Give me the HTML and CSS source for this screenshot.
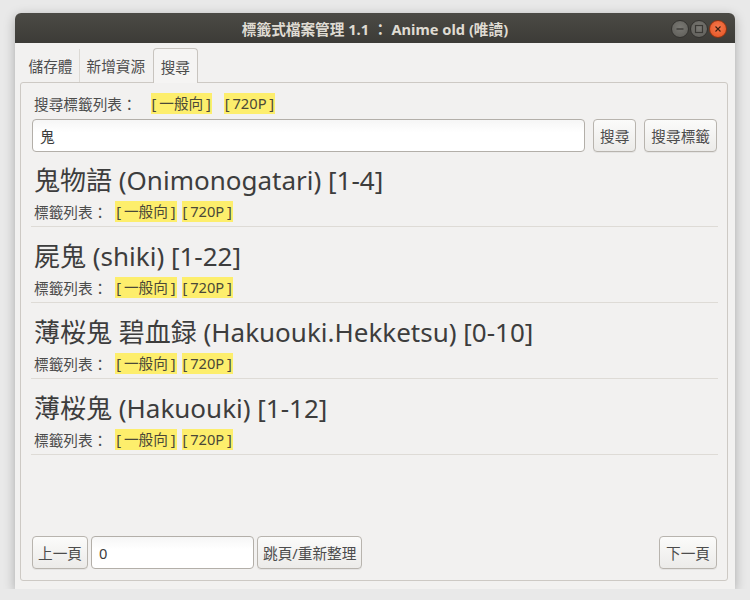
FILE: index.html
```html
<!DOCTYPE html>
<html lang="zh-Hant">
<head>
    <meta charset="UTF-8">
    <meta name="viewport" content="width=device-width, initial-scale=1.0">
    <title>標籤式檔案管理 1.1</title>
    <link rel="stylesheet" href="styles.css">
</head>
<body>
    <div class="window">
        <div class="titlebar">
            <span class="title">標籤式檔案管理 1.1 ： Anime old (唯讀)</span>
            <div class="win-buttons">
                <span class="wbtn"><svg width="10" height="10" viewBox="0 0 10 10"><path d="M1.5 5h7" stroke="#3a3935" stroke-width="1.3"/></svg></span>
                <span class="wbtn"><svg width="10" height="10" viewBox="0 0 10 10"><rect x="1.5" y="1.5" width="7" height="7" fill="none" stroke="#3a3935" stroke-width="1.2"/></svg></span>
                <span class="wbtn close"><svg width="10" height="10" viewBox="0 0 10 10"><path d="M2.5 2.5l5 5M7.5 2.5l-5 5" stroke="#3b1f12" stroke-width="1.1"/></svg></span>
            </div>
        </div>
        <div class="client">
            <div class="tabs">
                <div class="tab">儲存體</div>
                <div class="tab">新增資源</div>
                <div class="tab active">搜尋</div>
            </div>
            <div class="pane">
                <div class="search-tags">
                    <span class="label">搜尋標籤列表：</span>
                    <span class="tag">[ 一般向 ]</span>
                    <span class="tag">[ 720P ]</span>
                </div>
                <div class="search-row">
                    <input class="field search-field" type="text" value="鬼">
                    <button class="btn">搜尋</button>
                    <button class="btn">搜尋標籤</button>
                </div>

                <div class="results">
                    <div class="item">
                        <div class="item-title">鬼物語 (Onimonogatari) [1-4]</div>
                        <div class="item-tags"><span class="label">標籤列表：</span><span class="tag">[ 一般向 ]</span><span class="tag">[ 720P ]</span></div>
                    </div>
                    <div class="item">
                        <div class="item-title">屍鬼 (shiki) [1-22]</div>
                        <div class="item-tags"><span class="label">標籤列表：</span><span class="tag">[ 一般向 ]</span><span class="tag">[ 720P ]</span></div>
                    </div>
                    <div class="item">
                        <div class="item-title">薄桜鬼 碧血録 (Hakuouki.Hekketsu) [0-10]</div>
                        <div class="item-tags"><span class="label">標籤列表：</span><span class="tag">[ 一般向 ]</span><span class="tag">[ 720P ]</span></div>
                    </div>
                    <div class="item">
                        <div class="item-title">薄桜鬼 (Hakuouki) [1-12]</div>
                        <div class="item-tags"><span class="label">標籤列表：</span><span class="tag">[ 一般向 ]</span><span class="tag">[ 720P ]</span></div>
                    </div>
                </div>

                <div class="pager">
                    <button class="btn">上一頁</button>
                    <input class="field page-field" type="text" value="0">
                    <button class="btn">跳頁/重新整理</button>
                    <button class="btn next">下一頁</button>
                </div>
            </div>
        </div>
    </div>
</body>
</html>
```

FILE: styles.css
```css
body {
    margin: 0;
    background: #e9e9e9;
    font-family: "Noto Sans", "Noto Sans CJK TC", sans-serif;
    color: #4c4c4c;
}

.window {
    width: 720px;
    height: 576px;
    margin: 13px 0 0 15px;
    display: flex;
    flex-direction: column;
    background: #f2f1f0;
    border-radius: 6px 6px 0 0;
    box-shadow: 0 3px 12px rgba(0, 0, 0, 0.28);
}

.titlebar {
    height: 30px;
    position: relative;
    display: flex;
    justify-content: center;
    align-items: center;
    background: linear-gradient(#4b4a45, #3c3b37);
    border-radius: 6px 6px 0 0;
}

.title {
    color: #dfdbd2;
    font-size: 14.67px;
    font-weight: bold;
}

.win-buttons {
    position: absolute;
    right: 8px;
    top: 7px;
    display: flex;
    gap: 1px;
}

.wbtn {
    width: 18px;
    height: 18px;
    border-radius: 50%;
    background: radial-gradient(circle at 50% 40%, #7a7974, #5c5b56);
    border: 1px solid #33322f;
    box-sizing: border-box;
    display: flex;
    align-items: center;
    justify-content: center;
}

.wbtn.close {
    background: radial-gradient(circle at 50% 40%, #f47a4f, #e4501e);
    border-color: #8a3414;
}

.client {
    flex: 1;
    display: flex;
    flex-direction: column;
    padding: 5px 7px 8px 5px;
}

.tabs {
    display: flex;
    height: 34px;
    margin-left: 2px;
    position: relative;
    z-index: 1;
}

.tab {
    font-size: 14.67px;
    padding: 0 6.5px;
    display: flex;
    align-items: center;
    color: #4c4c4c;
    border-right: 1px solid #dcd9d4;
    margin-top: 1px;
}

.tab:nth-child(2) {
    border-right: none;
}

.tab.active {
    margin-top: 0;
    margin-left: 1px;
    padding: 0 7px;
    background: #f5f4f3;
    border: 1px solid #c8c4bf;
    border-bottom: none;
    border-radius: 4px 4px 0 0;
    height: 35px;
    box-sizing: border-box;
}

.pane {
    flex: 1;
    display: flex;
    flex-direction: column;
    border: 1px solid #cdc9c4;
    border-radius: 3px;
    padding: 10px 10px 11px 11px;
}

.label {
    font-size: 14.67px;
    color: #4c4c4c;
}

.tag {
    font-size: 14.67px;
    background: #fdee6c;
    color: #4a4838;
    line-height: 21px;
    padding: 0 1px;
    white-space: pre;
    word-spacing: -1px;
}

.search-tags {
    display: flex;
    align-items: center;
    height: 21px;
    padding-left: 2px;
}

.search-tags .label {
    margin-right: 14px;
}

.search-tags .tag + .tag {
    margin-left: 12px;
}

.search-row {
    display: flex;
    gap: 8px;
    margin-top: 5px;
}

.field {
    height: 33px;
    box-sizing: border-box;
    border: 1px solid #b3afa9;
    border-radius: 4px;
    background: linear-gradient(#f6f6f6, #ffffff 40%);
    font-family: inherit;
    font-size: 14.67px;
    color: #3c3c3c;
    padding: 0 7px;
    outline: none;
}

.search-field {
    flex: 1;
}

.btn {
    height: 33px;
    box-sizing: border-box;
    border: 1px solid #b8b4ae;
    border-radius: 4px;
    background: linear-gradient(#fbfbfa, #ecebe9);
    box-shadow: 0 1px 0 rgba(0, 0, 0, 0.05);
    font-family: inherit;
    font-size: 14.67px;
    color: #4c4c4c;
    padding: 0 6px;
}

.results {
    flex: 1;
    padding-top: 11px;
}

.item {
    border-bottom: 1px solid #dedbd6;
    padding: 0 0 4px 2px;
    margin: 0 -1px 12px -1px;
}

.item-title {
    font-size: 26px;
    line-height: 34px;
    color: #3d3d3d;
    padding-left: 1px;
}

.item-tags {
    display: flex;
    align-items: center;
    margin-top: 4px;
    height: 21px;
    padding-left: 1px;
}

.item-tags .label {
    margin-right: 8px;
}

.item-tags .tag + .tag {
    margin-left: 5px;
}

.pager {
    display: flex;
    gap: 3px;
}

.pager .btn {
    padding: 0 5px;
}

.page-field {
    width: 163px;
}

.pager .next {
    margin-left: auto;
    padding: 0 6px;
}
```
